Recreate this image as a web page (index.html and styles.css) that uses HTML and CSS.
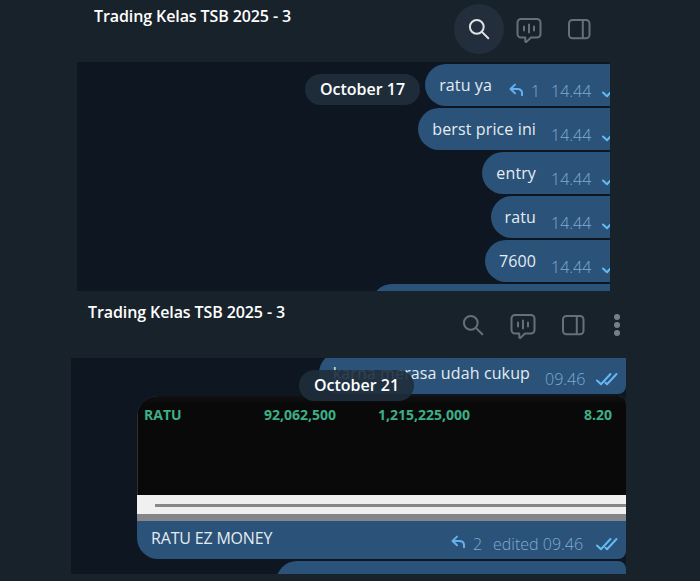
FILE: index.html
```
<!DOCTYPE html>
<html lang="en">
<head>
  <meta charset="UTF-8">
  <meta name="viewport" content="width=device-width, initial-scale=1.0">
  <title>Trading Kelas TSB 2025 - 3</title>
  <link rel="stylesheet" href="styles.css">
</head>
<body>
  <!-- Shared icons -->
  <svg class="sprite">
    <symbol id="search" viewBox="0 0 26 26">
      <circle cx="10.8" cy="10.8" r="6.9"/>
      <path d="M15.900 15.900L22.300 22.300"/>
    </symbol>
    <symbol id="stream" viewBox="0 0 26 28">
      <path d="M5 4h16a3.500 3.500 0 0 1 3.500 3.500v11.500a3.500 3.500 0 0 1-3.500 3.500h-6l-4.300 4.100q-1.400 1-1.400-.7v-3.400H5a3.500 3.500 0 0 1-3.500-3.500V7.500A3.500 3.500 0 0 1 5 4z"/>
      <path d="M8 11.500v4M13 9.500v8M18 11.500v4"/>
    </symbol>
    <symbol id="sidebar" viewBox="0 0 24 22">
      <rect x="2" y="2" width="20.500" height="18.200" rx="3.500"/>
      <path d="M15.800 2.500v17.200"/>
    </symbol>
    <symbol id="reply" viewBox="0 0 16 14">
      <path d="M7 1.600L2.500 6l4.500 4.200M2.500 6h6.500q5 0 5 4v2.300"/>
    </symbol>
    <symbol id="checks" viewBox="0 0 24 14">
      <path d="M2 8.500l4 3.700L15.500 2M10.500 10.800l1.500 1.400L21.500 2"/>
    </symbol>
  </svg>

  <section class="window window-top">
    <header class="header">
      <h1 class="title">Trading Kelas TSB 2025 - 3</h1>
      <div class="actions">
        <span class="action active"><svg class="icon icon-search"><use href="#search"/></svg></span>
        <span class="action"><svg class="icon icon-stream"><use href="#stream"/></svg></span>
        <span class="action"><svg class="icon icon-sidebar"><use href="#sidebar"/></svg></span>
      </div>
    </header>
    <main class="chat">
      <div class="date">October 17</div>
      <div class="bubble">
        <span class="text">ratu ya</span>
        <span class="meta"><svg class="reply"><use href="#reply"/></svg><span class="count">1</span><span class="time">14.44</span><svg class="checks"><use href="#checks"/></svg></span>
      </div>
      <div class="bubble">
        <span class="text">berst price ini</span>
        <span class="meta"><span class="time">14.44</span><svg class="checks"><use href="#checks"/></svg></span>
      </div>
      <div class="bubble">
        <span class="text">entry</span>
        <span class="meta"><span class="time">14.44</span><svg class="checks"><use href="#checks"/></svg></span>
      </div>
      <div class="bubble">
        <span class="text">ratu</span>
        <span class="meta"><span class="time">14.44</span><svg class="checks"><use href="#checks"/></svg></span>
      </div>
      <div class="bubble">
        <span class="text">7600</span>
        <span class="meta"><span class="time">14.44</span><svg class="checks"><use href="#checks"/></svg></span>
      </div>
      <div class="bubble next"></div>
    </main>
  </section>

  <section class="window window-bottom">
    <header class="header">
      <h1 class="title">Trading Kelas TSB 2025 - 3</h1>
      <div class="actions">
        <span class="action"><svg class="icon icon-search"><use href="#search"/></svg></span>
        <span class="action"><svg class="icon icon-stream"><use href="#stream"/></svg></span>
        <span class="action"><svg class="icon icon-sidebar"><use href="#sidebar"/></svg></span>
        <span class="dots"><i></i><i></i><i></i></span>
      </div>
    </header>
    <main class="chat">
      <div class="date">October 21</div>
      <div class="bubble">
        <span class="text">karna merasa udah cukup</span>
        <span class="meta"><span class="time">09.46</span><svg class="checks"><use href="#checks"/></svg></span>
      </div>
      <div class="card">
        <div class="photo">
          <div class="row">
            <span>RATU</span>
            <span>92,062,500</span>
            <span>1,215,225,000</span>
            <span>8.20</span>
          </div>
          <div class="scroll"><div class="track"></div></div>
        </div>
        <div class="caption">
          <span class="text">RATU EZ MONEY</span>
          <span class="meta"><svg class="reply"><use href="#reply"/></svg><span class="count">2</span><span class="time">edited 09.46</span><svg class="checks"><use href="#checks"/></svg></span>
        </div>
      </div>
      <div class="bubble next"></div>
    </main>
  </section>
</body>
</html>
```

FILE: styles.css
```
* {
  box-sizing: border-box;
}
body {
  margin: 0;
  height: 581px;
  overflow: hidden;
  background: #18222b;
  color: #fff;
  font-family: "Open Sans", sans-serif;
}
.sprite {
  display: none;
}
svg {
  fill: none;
  stroke: currentColor;
  stroke-linecap: round;
  stroke-linejoin: round;
  flex: none;
}
.window-top {
  width: 533px;
  margin-left: 77px;
}
.window-bottom {
  width: 555px;
  margin-left: 71px;
}
.header {
  display: flex;
  justify-content: space-between;
  padding-left: 17px;
}
.window-top .header {
  height: 62px;
  padding-top: 4px;
}
.window-bottom .header {
  height: 67px;
  padding-top: 9px;
}
.title {
  margin: 0;
  font-size: 16px;
  line-height: 24px;
  font-weight: 600;
  letter-spacing: -0.1px;
  white-space: nowrap;
}
.actions {
  display: flex;
  color: #65707a;
}
.window-top .actions {
  margin-right: 6px;
}
.action {
  width: 50px;
  height: 50px;
  display: flex;
  align-items: center;
  justify-content: center;
  border-radius: 50%;
}
.active {
  background: #222e3b;
  color: #e0e2e4;
}
.icon {
  stroke-width: 2;
}
.icon-search {
  width: 26px;
  height: 26px;
}
.icon-stream {
  width: 26px;
  height: 28px;
}
.icon-sidebar {
  width: 24px;
  height: 22px;
}
.dots {
  width: 28px;
  height: 49px;
  padding-left: 10px;
  display: flex;
  flex-direction: column;
  align-items: center;
  justify-content: center;
  gap: 2px;
}
.dots i {
  width: 6px;
  height: 6px;
  border-radius: 50%;
  background: #75808a;
}
.chat {
  position: relative;
  display: flex;
  flex-direction: column;
  align-items: flex-end;
  gap: 2px;
  overflow: hidden;
  background: #0e1621;
}
.window-top .chat {
  height: 229px;
  padding-top: 2px;
}
.window-bottom .chat {
  height: 216px;
}
.window-bottom .bubble:nth-child(2) {
  margin-top: -6px;
  border-radius: 21px 0 8px 21px;
}
.bubble {
  height: 42px;
  flex: none;
  display: flex;
  align-items: center;
  padding-left: 14px;
  border-radius: 21px 0 0 21px;
  background: #2b5278;
}
.text {
  font-size: 16px;
  line-height: 24px;
  letter-spacing: 0.12px;
  color: #e4ecf2;
  white-space: nowrap;
}
.meta {
  display: flex;
  align-items: center;
  margin-top: 12px;
  margin-left: 15px;
  font-size: 16px;
  line-height: 24px;
  font-weight: 350;
  color: #7fabd6;
}
.window-top .meta {
  width: 59px;
}
.window-top .meta:has(.reply) {
  width: 103px;
}
.reply {
  width: 16px;
  height: 14px;
  margin: -3px 7px 0 1px;
  color: #65b0f0;
  stroke-width: 2;
}
.count {
  flex: none;
  width: 20px;
}
.time {
  flex: none;
  width: 40px;
  white-space: nowrap;
}
.checks {
  width: 24px;
  height: 14px;
  margin: 0 7px 0 10px;
  color: #65b9f4;
  stroke-width: 2;
}
.date {
  position: absolute;
  z-index: 1;
  left: 228px;
  height: 31px;
  width: 115px;
  border-radius: 16px;
  background: #1e2c39;
  font-size: 16px;
  line-height: 31px;
  font-weight: 600;
  text-align: center;
}
.window-top .date {
  top: 12px;
}
.window-bottom .date {
  top: 12px;
  background: rgba(31, 45, 60, 0.9);
}
.window-top .next {
  width: 239px;
}
.window-bottom .next {
  width: 350px;
  border-top-right-radius: 8px;
}
.card {
  width: 489px;
  height: 163px;
  flex: none;
  overflow: hidden;
  border-radius: 21px 8px 8px 21px;
  background: #2b5278;
}
.photo {
  height: 125px;
  display: flex;
  flex-direction: column;
  justify-content: space-between;
  border-bottom: 7px solid #85868a;
  background: linear-gradient(#121111, #090909 8px);
}
.row {
  height: 99px;
  display: grid;
  grid-template-columns: 86px 106px 134px 142px;
  padding: 8px 0 0 6px;
  border-left: 1px solid #303030;
  color: #3caf87;
  font-size: 14px;
  line-height: 21px;
  font-weight: 700;
  text-align: right;
}
.row span:first-child {
  text-align: left;
}
.scroll {
  height: 19px;
  padding: 9px 0 0 18px;
  background: #f0f0f0;
}
.track {
  height: 3px;
  background: #888;
}
.caption {
  height: 38px;
  display: flex;
  justify-content: space-between;
  align-items: center;
  padding: 0 0 5px 14px;
}
.caption .text {
  letter-spacing: -0.18px;
}
.caption .time {
  width: 92px;
}
```
